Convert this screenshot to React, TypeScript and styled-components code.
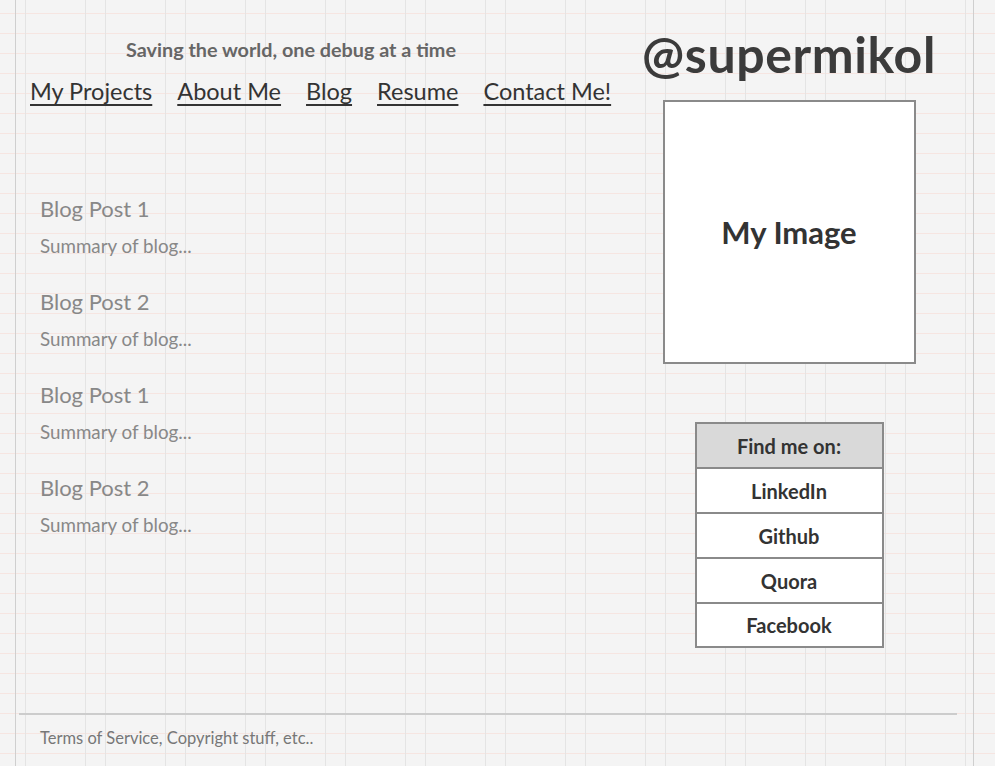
import React from 'react';
import styled, { createGlobalStyle } from 'styled-components';

const GlobalStyle = createGlobalStyle`
  html, body {
    margin: 0;
    padding: 0;
  }
  body {
    font-family: Lato, "Noto Sans", sans-serif;
    background-color: #f4f4f4;
    background-image: linear-gradient(
      to bottom,
      transparent 13px,
      #f6e5e1 13px,
      #f6e5e1 14px,
      transparent 14px
    );
    background-size: 100% 20px;
    min-height: 100vh;
  }
`;

const Frame = styled.div`
  margin-left: 15px;
  width: 959px;
  height: 100vh;
  box-sizing: border-box;
  border-left: 1px solid #cfcfcf;
  border-right: 1px solid #cfcfcf;
  background-image: linear-gradient(
    to right,
    transparent 9px,
    #e4e4e4 9px,
    #e4e4e4 10px,
    transparent 10px,
    transparent 69px,
    #e4e4e4 69px,
    #e4e4e4 70px,
    transparent 70px
  );
  background-size: 80px 100%;
  display: flex;
  flex-direction: column;
`;

const Main = styled.div`
  flex: 1;
  display: grid;
  grid-template-columns: 604px 338px;
`;

const LeftColumn = styled.div`
  padding: 37px 0 0 14px;
  display: flex;
  flex-direction: column;
`;

const Tagline = styled.div`
  padding-left: 96px;
  font-size: 19.8px;
  font-weight: 700;
  color: #666;
  line-height: 24px;
`;

const Nav = styled.nav`
  display: flex;
  gap: 25px;
  margin-top: 16px;
`;

const NavLink = styled.a`
  font-size: 23.5px;
  color: #333;
  text-decoration: underline;
  text-underline-offset: 4px;
  text-decoration-thickness: 2px;
  line-height: 28px;
  cursor: pointer;
`;

const PostList = styled.div`
  margin-top: 91px;
  padding-left: 10px;
  display: flex;
  flex-direction: column;
  gap: 32px;
`;

const Post = styled.div`
  display: flex;
  flex-direction: column;
  gap: 13px;
`;

const PostTitle = styled.div`
  font-size: 22px;
  color: #888;
  line-height: 26px;
`;

const PostSummary = styled.div`
  font-size: 18.8px;
  color: #888;
  line-height: 22px;
`;

const RightColumn = styled.div`
  display: flex;
  flex-direction: column;
  align-items: center;
  padding-top: 26px;
`;

const Handle = styled.div`
  font-size: 50px;
  font-weight: 700;
  color: #3b3b3b;
  line-height: 56px;
  letter-spacing: 0.6px;
`;

const ImageBox = styled.div`
  margin-top: 18px;
  width: 253px;
  height: 264px;
  box-sizing: border-box;
  border: 2px solid #8a8a8a;
  background: #fff;
  display: flex;
  align-items: center;
  justify-content: center;
  font-size: 31px;
  font-weight: 700;
  color: #333;
`;

const LinkTable = styled.div`
  margin-top: 58px;
  width: 189px;
  box-sizing: border-box;
  border: 2px solid #8a8a8a;
  display: flex;
  flex-direction: column;
`;

const LinkCell = styled.div<{ $header?: boolean }>`
  height: 43px;
  display: flex;
  align-items: center;
  justify-content: center;
  font-size: 20px;
  font-weight: 700;
  color: #333;
  background: ${(p) => (p.$header ? '#d9d9d9' : '#fff')};
  & + & {
    border-top: 2px solid #8a8a8a;
  }
  &:last-child {
    height: 42px;
  }
`;

const Footer = styled.footer`
  margin: 0 16px 0 3px;
  border-top: 2px solid #cccccc;
  height: 45px;
  padding: 0 0 6px 21px;
  display: flex;
  align-items: center;
  font-size: 16.5px;
  color: #777;
`;

const navItems = ['My Projects', 'About Me', 'Blog', 'Resume', 'Contact Me!'];
const posts = ['Blog Post 1', 'Blog Post 2', 'Blog Post 1', 'Blog Post 2'];
const links = ['LinkedIn', 'Github', 'Quora', 'Facebook'];

const App = () => {
  return (
    <>
      <GlobalStyle />
      <Frame>
        <Main>
          <LeftColumn>
            <Tagline>Saving the world, one debug at a time</Tagline>
            <Nav>
              {navItems.map((item) => (
                <NavLink key={item}>{item}</NavLink>
              ))}
            </Nav>
            <PostList>
              {posts.map((title, i) => (
                <Post key={i}>
                  <PostTitle>{title}</PostTitle>
                  <PostSummary>Summary of blog...</PostSummary>
                </Post>
              ))}
            </PostList>
          </LeftColumn>
          <RightColumn>
            <Handle>@supermikol</Handle>
            <ImageBox>My Image</ImageBox>
            <LinkTable>
              <LinkCell $header>Find me on:</LinkCell>
              {links.map((link) => (
                <LinkCell key={link}>{link}</LinkCell>
              ))}
            </LinkTable>
          </RightColumn>
        </Main>
        <Footer>Terms of Service, Copyright stuff, etc..</Footer>
      </Frame>
    </>
  );
};

export default App;
